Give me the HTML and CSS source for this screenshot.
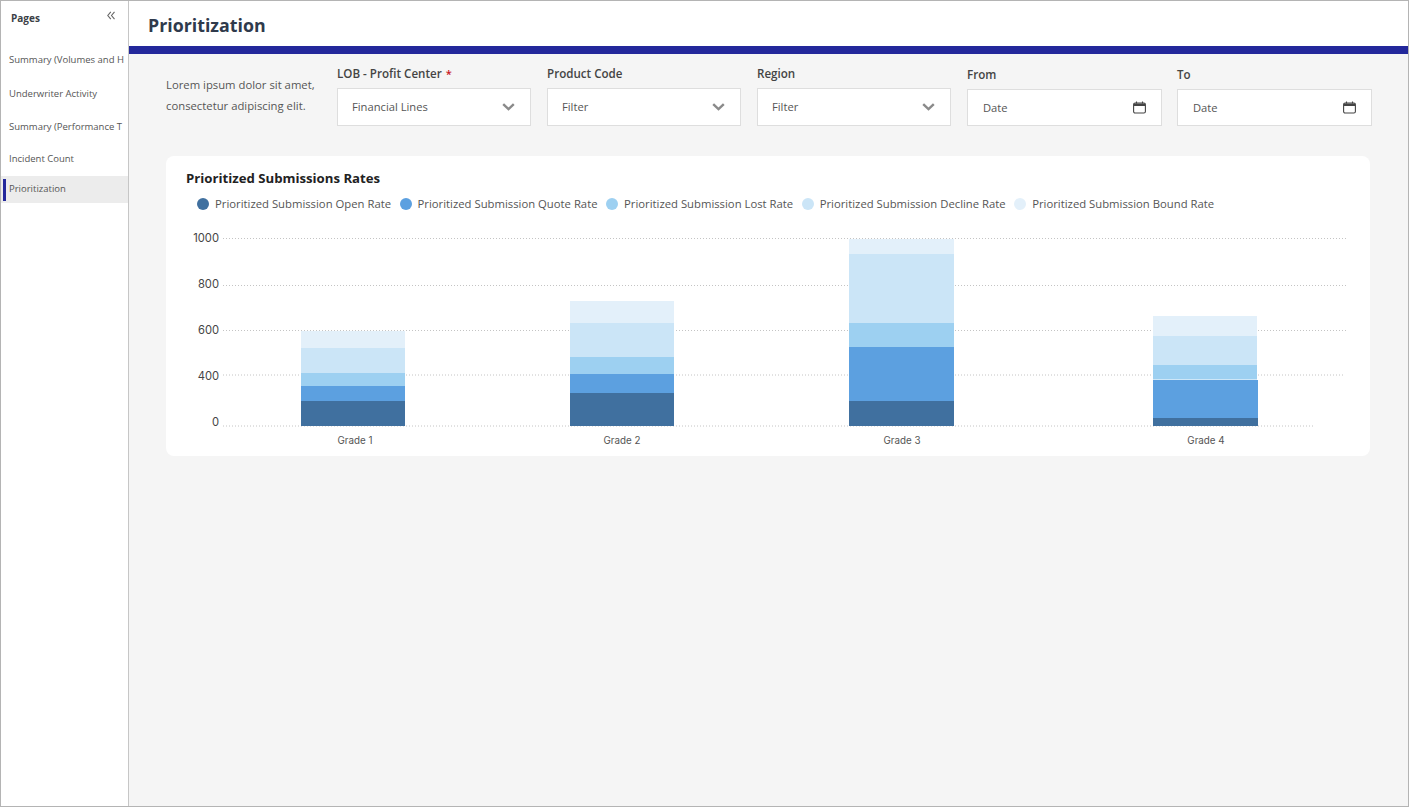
FILE: index.html
```html
<!DOCTYPE html>
<html lang="en">
<head>
<meta charset="utf-8">
<title>Prioritization</title>
<link rel="stylesheet" href="styles.css">
</head>
<body>
<div class="app">
  <aside class="sidebar">
    <div class="side-head">
      <span class="side-title">Pages</span>
      <svg class="collapse" width="8" height="9" viewBox="0 0 8 9"><path d="M3.800 .8 .8 4.500 3.800 8.200M7.500 .8 4.500 4.500 7.500 8.200" fill="none" stroke="#666" stroke-width="1.100"/></svg>
    </div>
    <nav class="nav">
      <a class="nav-item">Summary (Volumes and H</a>
      <a class="nav-item">Underwriter Activity</a>
      <a class="nav-item">Summary (Performance T</a>
      <a class="nav-item">Incident Count</a>
      <a class="nav-item active">Prioritization</a>
    </nav>
  </aside>
  <div class="main">
    <header class="topbar"><h1>Prioritization</h1></header>
    <div class="content">
      <section class="filters">
        <p class="intro">Lorem ipsum dolor sit amet, consectetur adipiscing elit.</p>
        <div class="field">
          <label>LOB - Profit Center <span class="req">*</span></label>
          <div class="control"><span>Financial Lines</span><svg width="13" height="8" viewBox="0 0 13 8"><path d="M1.200 1.200 6.500 6.200 11.800 1.200" fill="none" stroke="#8a8a8a" stroke-width="2.400"/></svg></div>
        </div>
        <div class="field">
          <label>Product Code</label>
          <div class="control"><span>Filter</span><svg width="13" height="8" viewBox="0 0 13 8"><path d="M1.200 1.200 6.500 6.200 11.800 1.200" fill="none" stroke="#8a8a8a" stroke-width="2.400"/></svg></div>
        </div>
        <div class="field">
          <label>Region</label>
          <div class="control"><span>Filter</span><svg width="13" height="8" viewBox="0 0 13 8"><path d="M1.200 1.200 6.500 6.200 11.800 1.200" fill="none" stroke="#8a8a8a" stroke-width="2.400"/></svg></div>
        </div>
        <div class="field date">
          <label>From</label>
          <div class="control"><span>Date</span><svg width="13" height="13" viewBox="0 0 13 13"><rect x="0.600" y="2" width="11.800" height="10" rx="1.500" fill="none" stroke="#444" stroke-width="1.100"/><path d="M1 2.500h11V5H1z" fill="#444"/><path d="M3.500.5V2.500M9.500.5V2.500" stroke="#444" stroke-width="1.100"/></svg></div>
        </div>
        <div class="field date">
          <label>To</label>
          <div class="control"><span>Date</span><svg width="13" height="13" viewBox="0 0 13 13"><rect x="0.600" y="2" width="11.800" height="10" rx="1.500" fill="none" stroke="#444" stroke-width="1.100"/><path d="M1 2.500h11V5H1z" fill="#444"/><path d="M3.500.5V2.500M9.500.5V2.500" stroke="#444" stroke-width="1.100"/></svg></div>
        </div>
      </section>
      <section class="card">
        <h2>Prioritized Submissions Rates</h2>
        <ul class="legend">
          <li><i class="dot c1"></i>Prioritized Submission Open Rate</li>
          <li><i class="dot c2"></i>Prioritized Submission Quote Rate</li>
          <li><i class="dot c3"></i>Prioritized Submission Lost Rate</li>
          <li><i class="dot c4"></i>Prioritized Submission Decline Rate</li>
          <li><i class="dot c5"></i>Prioritized Submission Bound Rate</li>
        </ul>
        <svg class="chart" width="1204" height="236" viewBox="166 220 1204 236">
          <g class="grid">
            <line x1="223" y1="238.500" x2="1346" y2="238.500"/>
            <line x1="223" y1="285.500" x2="1346" y2="285.500"/>
            <line x1="223" y1="330.500" x2="1346" y2="330.500"/>
            <line x1="223" y1="375" x2="1344" y2="375"/>
            <line x1="223" y1="426" x2="1315" y2="426"/>
          </g>
          <g class="ylab">
            <text x="219" y="242">1000</text>
            <text x="219" y="288">800</text>
            <text x="219" y="334">600</text>
            <text x="219" y="380">400</text>
            <text x="219" y="426">0</text>
          </g>
          <g>
            <rect class="f5" x="301" y="331" width="104" height="17"/>
            <rect class="f4" x="301" y="348" width="104" height="25"/>
            <rect class="f3" x="301" y="373" width="104" height="13"/>
            <rect class="f2" x="301" y="386" width="104" height="15"/>
            <rect class="f1" x="301" y="401" width="104" height="25"/>

            <rect class="f5" x="570" y="301" width="104" height="22"/>
            <rect class="f4" x="570" y="323" width="104" height="34"/>
            <rect class="f3" x="570" y="357" width="104" height="17"/>
            <rect class="f2" x="570" y="374" width="104" height="19"/>
            <rect class="f1" x="570" y="393" width="104" height="33"/>

            <rect class="f5" x="849" y="239" width="105" height="15"/>
            <rect class="f4" x="849" y="254" width="105" height="69"/>
            <rect class="f3" x="849" y="323" width="105" height="24"/>
            <rect class="f2" x="849" y="347" width="105" height="54"/>
            <rect class="f1" x="849" y="401" width="105" height="25"/>

            <rect class="f5" x="1153" y="316" width="104" height="20"/>
            <rect class="f4" x="1153" y="336" width="104" height="29"/>
            <rect class="f3" x="1153" y="365" width="104" height="14.500"/>
            <rect class="f2" x="1153" y="380" width="105" height="38"/>
            <rect class="f1" x="1153" y="418" width="105" height="8"/>
          </g>
          <g class="xlab">
            <text x="355" y="444">Grade 1</text>
            <text x="622" y="444">Grade 2</text>
            <text x="902" y="444">Grade 3</text>
            <text x="1206" y="444">Grade 4</text>
          </g>
        </svg>
      </section>
    </div>
  </div>
</div>
</body>
</html>
```
FILE: styles.css
```css
* { box-sizing: border-box; }
html, body { margin: 0; height: 100%; }
body { font-family: "Open Sans", "Noto Sans", sans-serif; color: #444; background: #fff; }

.app {
  display: flex;
  width: 1409px;
  height: 807px;
  border: 1px solid #b4b4b4;
  overflow: hidden;
}

.sidebar {
  flex: 0 0 128px;
  width: 128px;
  min-width: 0;
  overflow: hidden;
  border-right: 1px solid #c6c6c6;
  background: #fff;
}
.side-head {
  display: flex;
  justify-content: space-between;
  align-items: flex-start;
  height: 43px;
  padding: 10px 13px 0 10px;
}
.side-title { font-size: 10px; font-weight: 700; color: #3c3f46; line-height: 14px; }

.nav { display: flex; flex-direction: column; }
.nav-item {
  display: block;
  height: 33px;
  padding: 8px 0 0 8px;
  font-size: 9.500px;
  line-height: 15px;
  color: #555;
  white-space: nowrap;
  overflow: hidden;
}
.nav-item:first-child { height: 34px; }
.nav-item:nth-child(3) { height: 32px; }
.nav-item.active {
  height: 27px;
  padding: 5px 0 0 8px;
  background: #ececec;
  position: relative;
}
.nav-item.active::before {
  content: "";
  position: absolute;
  left: 2px;
  top: 3px;
  width: 3px;
  height: 22px;
  background: #23289b;
}

.main { flex: 1; display: flex; flex-direction: column; min-width: 0; }
.topbar {
  height: 53px;
  background: #fff;
  border-bottom: 8px solid #23289b;
  padding-left: 19px;
}
.topbar h1 {
  margin: 0;
  padding-top: 11px;
  font-size: 17.800px;
  line-height: 26px;
  font-weight: 700;
  color: #2f3a4c;
}

.content { flex: 1; background: #f5f5f5; padding: 0 0 0 37px; }

.filters { display: flex; height: 102px; padding-top: 11px; }
.intro {
  flex: 0 0 171px;
  margin: 0;
  padding: 9px 12px 0 0;
  font-size: 11.300px;
  line-height: 21px;
  color: #555;
}
.field { flex: 0 0 194px; margin-right: 16px; }
.field label {
  display: block;
  height: 23px;
  font-size: 11.600px;
  line-height: 17px;
  font-weight: 600;
  color: #444;
}
.req { color: #c8161d; font-size: 11px; margin-left: 1px; }
.control {
  display: flex;
  justify-content: space-between;
  align-items: center;
  height: 38px;
  padding: 0 15px;
  background: #fff;
  border: 1px solid #dedede;
  font-size: 11.200px;
  color: #555;
}
.field:not(.date) .control span { position: relative; top: -1px; left: -1px; }
.date { flex-basis: 195px; margin-right: 15px; }
.date label { padding-top: 1px; height: 24px; }
.date .control { height: 37px; }

.card {
  width: 1204px;
  height: 300px;
  background: #fff;
  border-radius: 8px;
  padding: 13px 0 0;
  position: relative;
}
.card h2 {
  margin: 0 0 0 20px;
  font-size: 13.200px;
  line-height: 18px;
  font-weight: 700;
  color: #222;
}
.legend {
  display: flex;
  list-style: none;
  margin: 8px 0 0 31px;
  padding: 0;
  font-size: 11.300px;
  line-height: 17px;
  color: #555;
}
.legend li { display: flex; align-items: center; margin-right: 8.500px; white-space: nowrap; }
.dot { width: 12px; height: 12px; border-radius: 50%; margin-right: 6px; }
.c1 { background: #40709f; }
.c2 { background: #5ca0e0; }
.c3 { background: #9dd0f1; }
.c4 { background: #cbe5f7; }
.c5 { background: #e3f0fa; }

.chart { position: absolute; left: 0; top: 64px; }
.grid line { stroke: #c4c4c4; stroke-width: 1; stroke-dasharray: 1 2; }
.ylab text { font-family: Inter, sans-serif; font-size: 11.200px; fill: #444; text-anchor: end; }
.xlab text { font-family: Inter, sans-serif; font-size: 9.800px; fill: #555; text-anchor: middle; }
.f1 { fill: #40709f; }
.f2 { fill: #5ca0e0; }
.f3 { fill: #9dd0f1; }
.f4 { fill: #cbe5f7; }
.f5 { fill: #e3f0fa; }
```
